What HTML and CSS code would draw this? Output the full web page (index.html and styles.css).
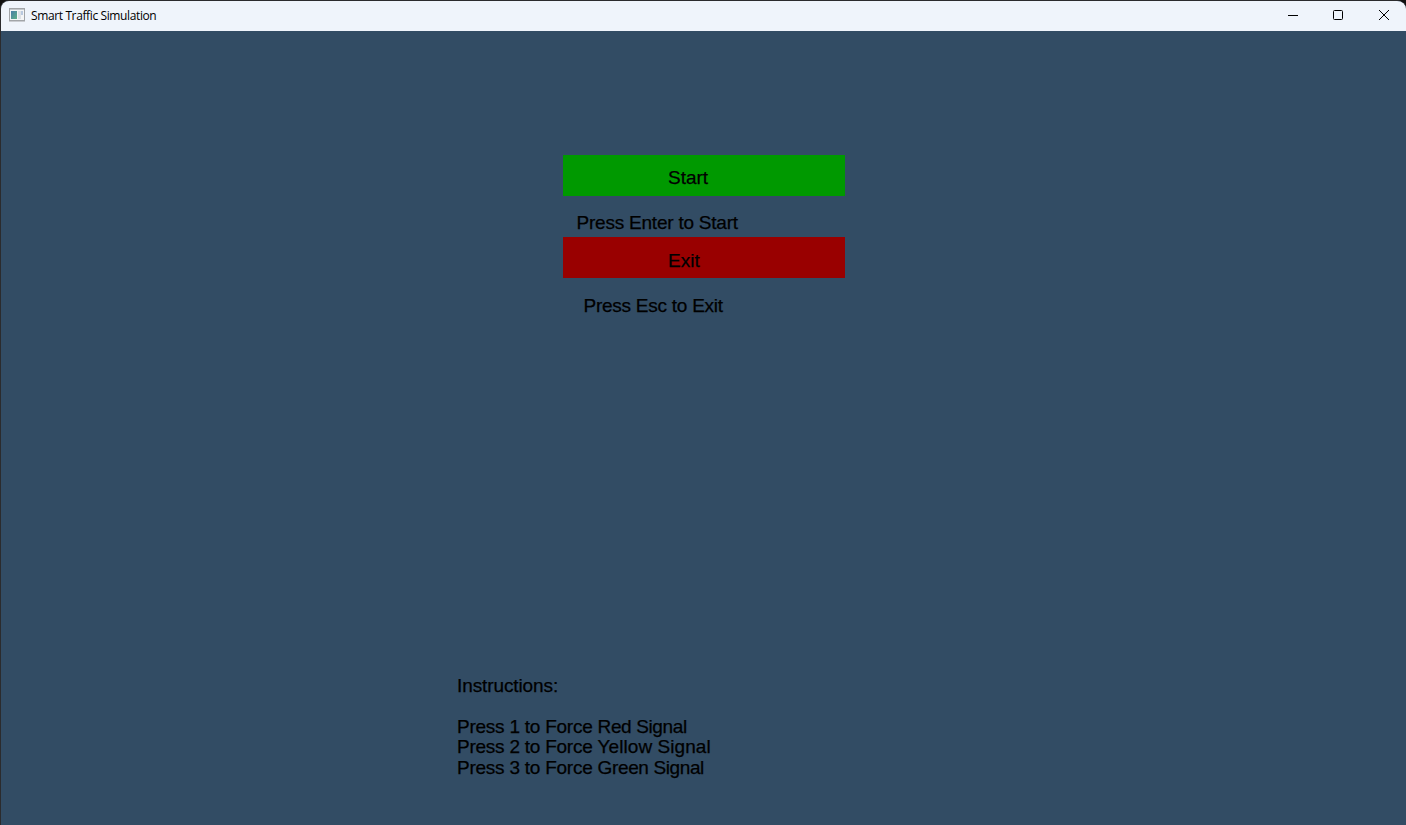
FILE: index.html
```html
<!DOCTYPE html>
<html lang="en">
<head>
<meta charset="utf-8">
<title>Smart Traffic Simulation</title>
<link rel="stylesheet" href="styles.css">
</head>
<body>
<div class="window">
  <header class="titlebar">
    <svg class="app-icon" width="16" height="14" viewBox="0 0 16 14">
      <defs><linearGradient id="pane" x1="0" y1="0" x2="1" y2="1"><stop offset="0" stop-color="#4a7ea8"/><stop offset="1" stop-color="#5fb086"/></linearGradient></defs>
      <rect x=".5" y=".5" width="15" height="12" fill="#f4f5f6" stroke="#a2a5a8"/>
      <path d="M1 1.5h14" stroke="#c4c8cc"/>
      <rect x="2" y="3" width="6" height="8" fill="url(#pane)"/>
      <rect x="9" y="3" width="3" height="8" fill="#dde1e6"/>
      <rect x="12" y="3" width="2" height="4" fill="#b9c9df"/>
      <path d="M0 13.5h16" stroke="#c9ccd1"/>
    </svg>
    <span class="title">Smart Traffic Simulation</span>
    <div class="controls">
      <svg width="46" height="30" viewBox="0 0 46 30"><path d="M18 14.5h10" stroke="#000"/></svg>
      <svg width="46" height="30" viewBox="0 0 46 30"><rect x="17.5" y="9.5" width="9" height="9" rx="1" fill="none" stroke="#000"/></svg>
      <svg width="46" height="30" viewBox="0 0 46 30"><path d="M17 9l10 10M27 9l-10 10" stroke="#000"/></svg>
    </div>
  </header>
  <main class="scene">
    <section class="menu">
      <div class="button start">Start</div>
      <p class="hint hint-start">Press Enter to Start</p>
      <div class="button exit">Exit</div>
      <p class="hint hint-exit">Press Esc to Exit</p>
    </section>
    <section class="instructions">
      <p class="heading">Instructions:</p>
      <p class="line">Press 1 to Force <span class="signal">Red Signal</span></p>
      <p class="line">Press 2 to Force <span class="signal yellow">Yellow Signal</span></p>
      <p class="line green">Press 3 to Force <span class="signal">Green Signal</span></p>
    </section>
  </main>
</div>
</body>
</html>
```
FILE: styles.css
```css
* { box-sizing: border-box; }
body { margin: 0; background: #111; overflow: hidden; }
p { margin: 0; }
.window {
  height: 825px;
  display: flex;
  flex-direction: column;
  border: solid #2b2b2d;
  border-width: 1px 0 0 1px;
  border-radius: 9px 9px 0 0;
  background: #324c64;
  overflow: hidden;
}
.titlebar {
  height: 30px;
  flex: none;
  display: flex;
  align-items: flex-start;
  padding-left: 8px;
  background: #eff4fb;
}
.app-icon { margin-top: 7px; }
.title {
  margin-left: 6px;
  font: 12px/30px "Open Sans", "Noto Sans", sans-serif;
  letter-spacing: -.38px;
  color: #000;
  white-space: nowrap;
}
.controls { display: flex; margin: 0 -2px 0 auto; }
.scene {
  flex: 1;
  display: flex;
  flex-direction: column;
  justify-content: space-between;
  font: 19px/20px "Liberation Sans", Arial, sans-serif;
  -webkit-text-stroke: .25px #000;
  color: #000;
  white-space: nowrap;
}
.menu { width: 282px; margin: 124px 0 0 562px; }
.button { height: 41px; padding: 13px 0 0 105px; }
.start { background: #009900; }
.exit { padding-top: 14px; background: #990000; }
.hint { height: 41px; }
.hint-start { padding: 17px 0 0 13.5px; letter-spacing: -.22px; }
.hint-exit { padding: 18px 0 0 20.5px; letter-spacing: -.25px; }
.instructions { margin: 0 0 48px 456px; }
.heading { height: 41px; letter-spacing: -.1px; }
.line { height: 20px; letter-spacing: -.24px; }
.signal { letter-spacing: -.38px; }
.yellow { letter-spacing: .06px; }
.green { padding-top: 1px; }
```
